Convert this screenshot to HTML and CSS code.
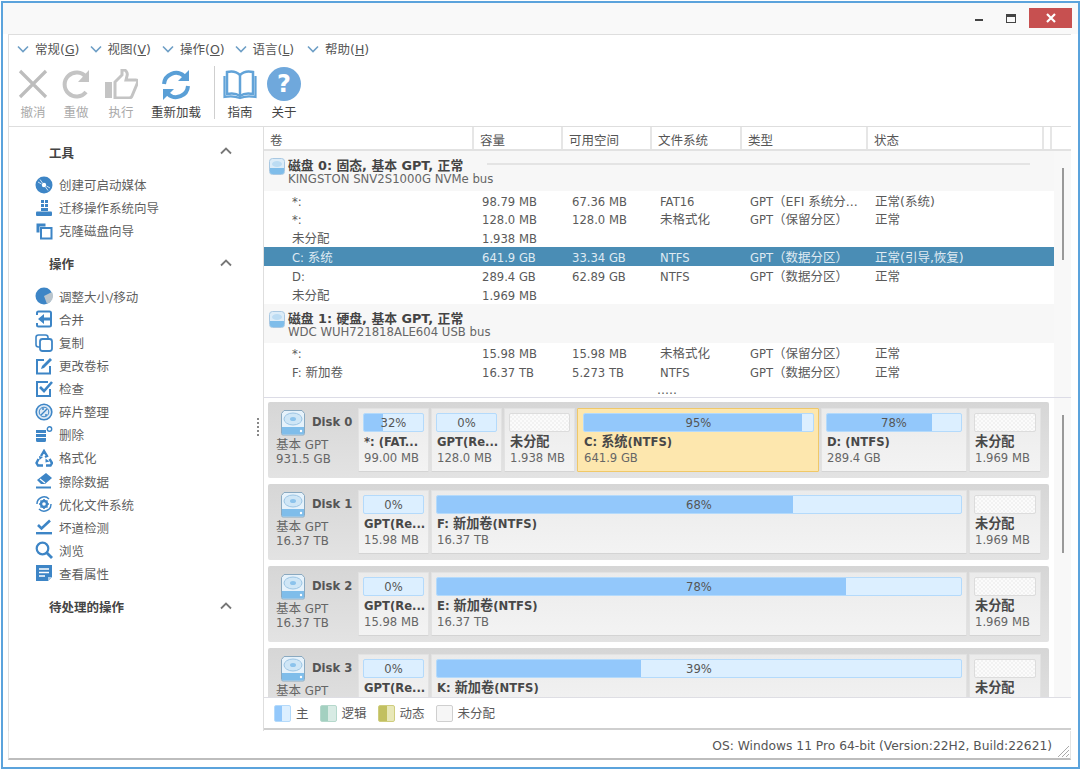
FILE: index.html
```html
<!DOCTYPE html>
<html lang="zh">
<head>
<meta charset="utf-8">
<title>分区助手</title>
<link rel="stylesheet" href="styles.css">
</head>
<body>
<svg class="defs" aria-hidden="true">
  <symbol id="chev" viewBox="0 0 12 8"><path d="M1 1.5 6 6.5 11 1.5" fill="none" stroke="#6e9fc6" stroke-width="1.6"/></symbol>
  <symbol id="up" viewBox="0 0 12 8"><path d="M1 6.5 6 1.5 11 6.5" fill="none" stroke="#777" stroke-width="1.8"/></symbol>
  <symbol id="disk-s" viewBox="0 0 16 17"><rect x=".5" y=".5" width="15" height="16" rx="3" fill="#dcecf8" stroke="#a9c8e2"/><path d="M1 10h14v4a2 2 0 0 1-2 2H3a2 2 0 0 1-2-2z" fill="#7fbdea"/><ellipse cx="8" cy="6" rx="5" ry="3" fill="#bcdcf3"/></symbol>
  <symbol id="disk-l" viewBox="0 0 26 27"><path d="M4 1.5h18l2.5 3v20a1.5 1.5 0 0 1-1.500 1.500H3a1.500 1.500 0 0 1-1.500-1.500v-20z" fill="#e6f2fb" stroke="#8aa9c0"/><path d="M2 18h22v6.500a1 1 0 0 1-1 1H3a1 1 0 0 1-1-1z" fill="#7fbdea"/><ellipse cx="13" cy="10" rx="9" ry="6" fill="#cfe6f6" stroke="#9cc5e4"/><ellipse cx="13" cy="10" rx="3" ry="2" fill="#8cc3ec"/><circle cx="21" cy="22" r="1.200" fill="#fff"/></symbol>
</svg>
<div class="win">
  <header class="titlebar">
    <span class="tb-min"></span>
    <span class="tb-max"></span>
    <span class="tb-close"><svg width="10" height="10" viewBox="0 0 10 10"><path d="M1 1 9 9M9 1 1 9" stroke="#fff" stroke-width="2.200"/></svg></span>
  </header>
  <div class="app">
    <nav class="menu">
      <span class="mi"><svg class="mchev"><use href="#chev"/></svg><span class="z">常规(<u>G</u>)</span></span>
      <span class="mi"><svg class="mchev"><use href="#chev"/></svg><span class="z">视图(<u>V</u>)</span></span>
      <span class="mi"><svg class="mchev"><use href="#chev"/></svg><span class="z">操作(<u>O</u>)</span></span>
      <span class="mi"><svg class="mchev"><use href="#chev"/></svg><span class="z">语言(<u>L</u>)</span></span>
      <span class="mi"><svg class="mchev"><use href="#chev"/></svg><span class="z">帮助(<u>H</u>)</span></span>
    </nav>
    <div class="toolbar">
      <div class="tool t-undo off"><svg width="30" height="30" viewBox="0 0 30 30"><path d="M2 2 28 28M28 2 2 28" stroke="#bdbdbd" stroke-width="3.200" fill="none"/></svg><span class="z">撤消</span></div>
      <div class="tool t-redo off"><svg width="28" height="30" viewBox="0 0 28 30"><path d="M24 8A12 12 0 1 0 24 23" stroke="#c4c4c4" stroke-width="4" fill="none"/><path d="M27 1v12H16z" fill="#c4c4c4"/></svg><span class="z">重做</span></div>
      <div class="tool t-apply off"><svg width="34" height="30" viewBox="0 0 34 30"><rect x="1" y="13" width="7" height="16" fill="#c4c4c4"/><path d="M11 13 18 6V1c4-1 6 3 5 6l-1 4h10c2 0 2 2 1 4l-5 12c-.5 1.500-1.500 2-3 2H11z" fill="none" stroke="#c4c4c4" stroke-width="3"/></svg><span class="z">执行</span></div>
      <div class="tool t-reload"><svg width="32" height="32" viewBox="0 0 32 32"><path d="M4 15A12 12 0 0 1 24 7" stroke="#5a9fd6" stroke-width="4" fill="none"/><path d="M29 1v11H18z" fill="#5a9fd6"/><path d="M28 17A12 12 0 0 1 8 25" stroke="#5a9fd6" stroke-width="4" fill="none"/><path d="M3 31V20h11z" fill="#5a9fd6"/></svg><span class="z">重新加载</span></div>
      <span class="tsep"></span>
      <div class="tool t-guide"><svg width="34" height="32" viewBox="0 0 34 32"><path d="M17 6C13 2 8 2 4 3v22c5-1 9-1 13 2 4-3 8-3 13-2V3c-4-1-9-1-13 3zM17 6v20" fill="#fff" stroke="#62a3d8" stroke-width="2.500"/><path d="M1.500 7v21c5-1 10-1 15.500 1 5-2 10-2 15.500-1V7" fill="none" stroke="#62a3d8" stroke-width="2.200"/></svg><span class="z">指南</span></div>
      <div class="tool t-about"><svg width="34" height="34" viewBox="0 0 34 34"><circle cx="17" cy="17" r="17" fill="#6fa8dc"/><text x="17" y="25" text-anchor="middle" class="qmark">?</text></svg><span class="z">关于</span></div>
    </div>
    <div class="split">
      <aside class="side">
        <div class="sh"><b class="z">工具</b><svg class="supc"><use href="#up"/></svg></div>
        <ul class="sl">
          <li><svg class="si" viewBox="0 0 18 18"><circle cx="9" cy="9" r="8.500" fill="#3d85c6"/><circle cx="9" cy="9" r="2.200" fill="#fff"/><path d="M5 3.500 7.500 7M3 6l3.500 2M13 14.500 10.500 11M15 12l-3.500-2" stroke="#cfe2f3" stroke-width="1"/></svg><span class="z">创建可启动媒体</span></li>
          <li><svg class="si" viewBox="0 0 18 18"><path d="M6 1h3v3H6zM10 1h3v3h-3zM6 5h3v3H6zM10 5h3v3h-3zM6 9h7v3H6z" fill="#3d85c6"/><rect x="1" y="12.500" width="16" height="4.500" rx="1" fill="#3d85c6"/></svg><span class="z">迁移操作系统向导</span></li>
          <li><svg class="si" viewBox="0 0 18 18"><path d="M1.500 1.500h9v3h-6v6h-3z" fill="#3d85c6"/><rect x="6" y="6" width="10.500" height="10.500" fill="#fff" stroke="#3d85c6" stroke-width="2"/></svg><span class="z">克隆磁盘向导</span></li>
        </ul>
        <div class="sh"><b class="z">操作</b><svg class="supc"><use href="#up"/></svg></div>
        <ul class="sl">
          <li><svg class="si" viewBox="0 0 18 18"><circle cx="9" cy="9" r="8.500" fill="#3d85c6"/><path d="M9 9 17 5A8.500 8.500 0 0 1 12 17z" fill="#b9c4cc"/></svg><span class="z">调整大小/移动</span></li>
          <li><svg class="si" viewBox="0 0 18 18"><path d="M2 5V3a1.500 1.500 0 0 1 1.500-1.500h11A1.500 1.500 0 0 1 16 3v12a1.500 1.500 0 0 1-1.500 1.500h-11A1.500 1.500 0 0 1 2 15v-2" fill="none" stroke="#3d85c6" stroke-width="2"/><path d="M17 7.500H9V4L3 9l6 5v-3.500h8z" fill="#3d85c6"/></svg><span class="z">合并</span></li>
          <li><svg class="si" viewBox="0 0 18 18"><rect x="1" y="1" width="12" height="12" rx="2.500" fill="none" stroke="#3d85c6" stroke-width="1.600"/><rect x="5" y="5" width="12" height="12" rx="2.500" fill="#fff" stroke="#3d85c6" stroke-width="1.800"/></svg><span class="z">复制</span></li>
          <li><svg class="si" viewBox="0 0 18 18"><path d="M9 3H2v13.500h13V9" fill="none" stroke="#3d85c6" stroke-width="2"/><path d="M6 12l1-3 8-8 2 2-8 8z" fill="#3d85c6"/></svg><span class="z">更改卷标</span></li>
          <li><svg class="si" viewBox="0 0 18 18"><path d="M13 2H2v14h13V9" fill="none" stroke="#3d85c6" stroke-width="2"/><path d="M5 7l4 4 8-9" fill="none" stroke="#3d85c6" stroke-width="2.600"/></svg><span class="z">检查</span></li>
          <li><svg class="si" viewBox="0 0 18 18"><circle cx="9" cy="9" r="7.800" fill="#dce9f5" stroke="#3d85c6" stroke-width="1.600"/><circle cx="9" cy="9" r="4.800" fill="none" stroke="#3d85c6" stroke-width="1"/><path d="M6 12 12 6M7 6h2M10 12h2" stroke="#3d85c6" stroke-width="1.400"/></svg><span class="z">碎片整理</span></li>
          <li><svg class="si" viewBox="0 0 18 18"><path d="M1 4h10v3H1zM1 8h10v3H1zM1 12h10v2.500a1.500 1.500 0 0 1-1.500 1.500h-7A1.500 1.500 0 0 1 1 14.500z" fill="#3d85c6"/><circle cx="14.500" cy="3" r="2.200" fill="none" stroke="#3d85c6" stroke-width="1.400"/></svg><span class="z">删除</span></li>
          <li><svg class="si" viewBox="0 0 18 18"><path d="M6 7l3-5 3 5-2 1M3.500 10 1.500 14l1.500 2.500h5M11 16.500h4.500l1.500-2.500-2.500-4" fill="none" stroke="#3d85c6" stroke-width="2.400"/><path d="M4 7l4 1-3.500 3zM10.500 13.500l4-1-4-3z" fill="#3d85c6"/></svg><span class="z">格式化</span></li>
          <li><svg class="si" viewBox="0 0 18 18"><path d="M11 1l6 5-7 6H6L2 8z" fill="#3d85c6"/><path d="M5 7l5 4" stroke="#fff" stroke-width="1.200"/><rect x="1" y="14.500" width="15" height="2" fill="#3d85c6"/></svg><span class="z">擦除数据</span></li>
          <li><svg class="si" viewBox="0 0 18 18"><path d="M2 9a7 7 0 0 1 12-5M16 9a7 7 0 0 1-12 5" fill="none" stroke="#3d85c6" stroke-width="1.500"/><circle cx="9" cy="9" r="3" fill="none" stroke="#3d85c6" stroke-width="2.400"/><path d="M9 4v2M9 12v2M4 9h2M12 9h2M5.500 5.500l1.500 1.500M11 11l1.500 1.500M12.500 5.500 11 7M7 11l-1.500 1.500" stroke="#3d85c6" stroke-width="1.600"/></svg><span class="z">优化文件系统</span></li>
          <li><svg class="si" viewBox="0 0 18 18"><path d="M3 7l3.500 3.500L15 2.500" fill="none" stroke="#3d85c6" stroke-width="2.600"/><rect x="1" y="14" width="16" height="2.400" fill="#3d85c6"/></svg><span class="z">坏道检测</span></li>
          <li><svg class="si" viewBox="0 0 18 18"><circle cx="7.500" cy="7.500" r="5.800" fill="none" stroke="#3d85c6" stroke-width="2.200"/><path d="M11.500 11.500 17 17" stroke="#3d85c6" stroke-width="2.800"/></svg><span class="z">浏览</span></li>
          <li><svg class="si" viewBox="0 0 18 18"><path d="M1 1h16v12l-4 4H1z" fill="#3d85c6"/><path d="M4 5h10M4 8.500h10M4 12h6" stroke="#fff" stroke-width="1.500"/><path d="M13 17v-4h4z" fill="#a9cbe8"/></svg><span class="z">查看属性</span></li>
        </ul>
        <div class="sh"><b class="z">待处理的操作</b><svg class="supc"><use href="#up"/></svg></div>
        <span class="grip-v"></span>
      </aside>
      <section class="right">
        <div class="lhead">
          <span class="c0 z">卷</span><span class="c1 z">容量</span><span class="c2 z">可用空间</span><span class="c3 z">文件系统</span><span class="c4 z">类型</span><span class="c5 z">状态</span><span class="c6"></span>
        </div>
        <div class="lbody">
          <div class="rows">
            <div class="grp"><svg class="gi"><use href="#disk-s"/></svg><div class="gt"><div class="gl"><b>磁盘 0: 固态, 基本 GPT, 正常</b><i class="rule"></i></div><div class="gs">KINGSTON SNV2S1000G NVMe bus</div></div></div>
            <div class="row"><span>*:</span><span>98.79 MB</span><span>67.36 MB</span><span>FAT16</span><span>GPT<span class="z">（EFI 系统分...</span></span><span class="z">正常(系统)</span></div>
            <div class="row"><span>*:</span><span>128.0 MB</span><span>128.0 MB</span><span class="z">未格式化</span><span>GPT<span class="z">（保留分区）</span></span><span class="z">正常</span></div>
            <div class="row"><span class="z">未分配</span><span>1.938 MB</span><span></span><span></span><span></span><span></span></div>
            <div class="row sel"><span>C: <span class="z">系统</span></span><span>641.9 GB</span><span>33.34 GB</span><span>NTFS</span><span>GPT<span class="z">（数据分区）</span></span><span class="z">正常(引导,恢复)</span></div>
            <div class="row"><span>D:</span><span>289.4 GB</span><span>62.89 GB</span><span>NTFS</span><span>GPT<span class="z">（数据分区）</span></span><span class="z">正常</span></div>
            <div class="row"><span class="z">未分配</span><span>1.969 MB</span><span></span><span></span><span></span><span></span></div>
            <div class="grp"><svg class="gi"><use href="#disk-s"/></svg><div class="gt"><div class="gl"><b>磁盘 1: 硬盘, 基本 GPT, 正常</b></div><div class="gs">WDC WUH721818ALE604 USB bus</div></div></div>
            <div class="row"><span>*:</span><span>15.98 MB</span><span>15.98 MB</span><span class="z">未格式化</span><span>GPT<span class="z">（保留分区）</span></span><span class="z">正常</span></div>
            <div class="row"><span>F: <span class="z">新加卷</span></span><span>16.37 TB</span><span>5.273 TB</span><span>NTFS</span><span>GPT<span class="z">（数据分区）</span></span><span class="z">正常</span></div>
            <div class="more">.....</div>
          </div>
          <div class="vs"><span class="thumb t1"></span></div>
        </div>
        <div class="gbody">
          <div class="disks">
            <div class="disk">
              <div class="dl"><div class="dlt"><svg class="di"><use href="#disk-l"/></svg><b>Disk 0</b></div><div class="dli"><span class="z">基本</span> GPT</div><div class="dli">931.5 GB</div></div>
              <div class="pt w71"><div class="bar"><i style="width:32%"></i><span>32%</span></div><b>*: (FAT...</b><span>99.00 MB</span></div>
              <div class="pt w71"><div class="bar"><i style="width:0%"></i><span>0%</span></div><b>GPT(Re...</b><span>128.0 MB</span></div>
              <div class="pt w71"><div class="bar un"></div><b class="z">未分配</b><span>1.938 MB</span></div>
              <div class="pt grow sel"><div class="bar"><i style="width:95%"></i><span>95%</span></div><b>C: <span class="z">系统</span>(NTFS)</b><span>641.9 GB</span></div>
              <div class="pt w146"><div class="bar"><i style="width:78%"></i><span>78%</span></div><b>D: (NTFS)</b><span>289.4 GB</span></div>
              <div class="pt w72"><div class="bar un"></div><b class="z">未分配</b><span>1.969 MB</span></div>
            </div>
            <div class="disk">
              <div class="dl"><div class="dlt"><svg class="di"><use href="#disk-l"/></svg><b>Disk 1</b></div><div class="dli"><span class="z">基本</span> GPT</div><div class="dli">16.37 TB</div></div>
              <div class="pt w71"><div class="bar"><i style="width:0%"></i><span>0%</span></div><b>GPT(Re...</b><span>15.98 MB</span></div>
              <div class="pt grow"><div class="bar"><i style="width:68%"></i><span>68%</span></div><b>F: <span class="z">新加卷</span>(NTFS)</b><span>16.37 TB</span></div>
              <div class="pt w72"><div class="bar un"></div><b class="z">未分配</b><span>1.969 MB</span></div>
            </div>
            <div class="disk">
              <div class="dl"><div class="dlt"><svg class="di"><use href="#disk-l"/></svg><b>Disk 2</b></div><div class="dli"><span class="z">基本</span> GPT</div><div class="dli">16.37 TB</div></div>
              <div class="pt w71"><div class="bar"><i style="width:0%"></i><span>0%</span></div><b>GPT(Re...</b><span>15.98 MB</span></div>
              <div class="pt grow"><div class="bar"><i style="width:78%"></i><span>78%</span></div><b>E: <span class="z">新加卷</span>(NTFS)</b><span>16.37 TB</span></div>
              <div class="pt w72"><div class="bar un"></div><b class="z">未分配</b><span>1.969 MB</span></div>
            </div>
            <div class="disk">
              <div class="dl"><div class="dlt"><svg class="di"><use href="#disk-l"/></svg><b>Disk 3</b></div><div class="dli"><span class="z">基本</span> GPT</div></div>
              <div class="pt w71"><div class="bar"><i style="width:0%"></i><span>0%</span></div><b>GPT(Re...</b></div>
              <div class="pt grow"><div class="bar"><i style="width:39%"></i><span>39%</span></div><b>K: <span class="z">新加卷</span>(NTFS)</b></div>
              <div class="pt w72"><div class="bar un"></div><b class="z">未分配</b></div>
            </div>
          </div>
          <div class="vs"><span class="thumb t2"></span></div>
        </div>
        <div class="legend">
          <span class="lg"><i class="sw sw-p"></i><span class="z">主</span></span>
          <span class="lg"><i class="sw sw-l"></i><span class="z">逻辑</span></span>
          <span class="lg"><i class="sw sw-d"></i><span class="z">动态</span></span>
          <span class="lg"><i class="sw sw-u"></i><span class="z">未分配</span></span>
        </div>
      </section>
    </div>
  </div>
  <footer class="status">OS: Windows 11 Pro 64-bit (Version:22H2, Build:22621)<svg class="sgrip" width="12" height="12" viewBox="0 0 12 12"><path d="M12 1 1 12M12 5 5 12M12 9 9 12" stroke="#aaa" stroke-width="1"/></svg></footer>
</div>
</body>
</html>
```
FILE: styles.css
```css
* { box-sizing: border-box; }
html, body { margin: 0; padding: 0; }
body {
  width: 1080px; height: 769px; overflow: hidden;
  font-family: "DejaVu Sans", "Noto Sans CJK SC", sans-serif;
  font-size: 11.6px; line-height: 15px; color: #5a5a5a; background: #fff;
}
.defs { display: none; }
.z { font-family: "DejaVu Sans", "Noto Sans CJK SC", sans-serif; font-size: 12.5px; }
b { font-weight: 700; color: #4a4a4a; }

.win {
  width: 1079px; height: 768px; margin: 1px 0 0 1px;
  border: 2px solid #5ba3dc; background: #fff;
  display: flex; flex-direction: column;
}
.titlebar {
  height: 31px; flex: none; background: #f9f9f9;
  display: flex; justify-content: flex-end; align-items: flex-start;
  padding: 5px 6px 0 0;
}
.tb-min { width: 8px; height: 2px; background: #444; margin: 11px 23px 0 0; }
.tb-max { width: 10px; height: 9px; border: 1px solid #444; border-top-width: 3px; margin: 6px 13px 0 0; }
.tb-close { width: 43px; height: 20px; background: #c75050; display: flex; align-items: center; justify-content: center; }

.app {
  margin: 0 0 0 5px; width: 1063px; height: 697px; flex: none;
  border: 1px solid #dedede; border-bottom: 0; border-right: 0;
  display: flex; flex-direction: column; background: #fff;
}
.menu { height: 25px; flex: none; display: flex; padding: 3px 0 0 8px; align-items: center; }
.mi { width: 72.5px; display: flex; align-items: center; gap: 6px; flex: none; color: #555; }
.mchev { width: 12px; height: 8px; flex: none; }

.toolbar {
  height: 67px; flex: none; display: flex; align-items: flex-start;
  border-bottom: 1px solid #dedede; position: relative;
}
.tool { display: flex; flex-direction: column; align-items: center; height: 66px; justify-content: space-between; padding: 9px 0 5px; flex: none; color: #444; line-height: 16px; }
.tool.off { color: #aaa; }
.tool svg { flex: none; }
.t-undo { width: 30px; margin-left: 9px; }
.t-redo { width: 28px; margin-left: 14px; }
.t-apply { width: 34px; margin-left: 14px; }
.t-reload { width: 52px; margin-left: 12px; }
.tsep { width: 1px; height: 53px; background: #cfcfcf; margin: 6px 8px 0 12px; flex: none; }
.t-guide { width: 34px; }
.t-about { width: 34px; margin-left: 10px; padding-top: 7px; }
.qmark { font-family: "DejaVu Sans", sans-serif; font-weight: 700; font-size: 24px; fill: #fff; }

.split { flex: 1; min-height: 0; display: flex; }
.side {
  width: 255px; flex: none; border-right: 1px solid #dedede; padding-top: 12px;
  position: relative; background: #fff;
}
.sh { height: 26px; display: flex; align-items: center; justify-content: space-between; padding: 0 31px 0 40px; }
.sh b { color: #444; margin-top: 2px; }
.supc { width: 12px; height: 8px; margin-top: -2px; }
.sl { list-style: none; margin: 8px 0 8.5px; padding: 0 0 0 26px; }
.sl li { height: 23.1px; display: flex; align-items: center; gap: 6px; color: #5f5f5f; }
.sl li .z { margin-top: 2px; }
.si { width: 18px; height: 18px; flex: none; }
.grip-v {
  position: absolute; left: 248px; top: 291px; width: 2px; height: 20px;
  background: repeating-linear-gradient(#888 0 2px, transparent 2px 4px);
}

.right { width: 807px; flex: none; display: flex; flex-direction: column; min-width: 0; }
.lhead { height: 24px; flex: none; display: flex; border-bottom: 2px solid #e2e2e2; align-items: stretch; color: #555; }
.lhead > span { display: flex; align-items: center; padding: 4px 0 0 6px; border-right: 2px solid #e6e6e6; flex: none; }
.c0 { width: 210px; }
.c1 { width: 89px; }
.c2 { width: 89px; }
.c3 { width: 90px; }
.c4 { width: 126px; }
.c5 { width: 176px; }
.lbody { height: 247px; flex: none; display: flex; overflow: hidden; border-bottom: 1px solid #dcdce6; }
.rows { width: 790px; flex: none; }
.vs { flex: 1; background: #f8f8f8; position: relative; display: flex; justify-content: center; }
.thumb { width: 2px; background: #999; flex: none; }
.t1 { height: 92px; margin-top: 17px; }
.t2 { height: 138px; margin-top: 17px; }
.grp { height: 39.5px; background: #f7f7f7; display: flex; padding: 7px 0 0 5px; gap: 3px; }
.gi { width: 16px; height: 17px; flex: none; }
.gt { flex: 1; min-width: 0; }
.gl { display: flex; align-items: center; height: 15px; }
.gl b { font-size: 12.8px; font-family: "DejaVu Sans", "Noto Sans CJK SC", sans-serif; white-space: nowrap; width: 199px; flex: none; color: #444; }
.rule { width: 543px; height: 2px; background: #e4e4e4; flex: none; font-style: normal; margin-top: -3px; }
.gs { line-height: 13px; color: #666; font-size: 11.7px; white-space: nowrap; }
.row {
  height: 18.9px; display: grid; grid-template-columns: 190px 90px 88px 90px 125px 1fr;
  padding: 3px 0 0 28px; align-items: center; white-space: nowrap; line-height: 16px;
}
.row.sel { background: #4a8db5; color: #dfeaf2; }
.more { padding-left: 393px; line-height: 10px; font-size: 12.5px; margin-top: 4px; white-space: nowrap; }
.gbody { height: 299px; flex: none; display: flex; overflow: hidden; }
.disks { width: 790px; flex: none; padding: 4px 0 0 4px; display: flex; flex-direction: column; gap: 6px; overflow: hidden; }
.disk {
  width: 781px; height: 76px; flex: none; padding: 6px 8px 6px 0;
  display: flex; gap: 2px; background: linear-gradient(#d6d6d6, #e3e3e3);
  border-radius: 2px;
}
.dl { width: 90px; flex: none; padding: 1px 0 0 8px; margin-right: -2px; }
.dlt { display: flex; align-items: center; gap: 6px; height: 27px; padding-left: 4px; }
.dlt b { margin-top: 0; color: #555; }
.di { width: 26px; height: 27px; flex: none; }
.dli { line-height: 14px; height: 14px; color: #666; font-size: 11.8px; white-space: nowrap; }
.dlt + .dli { margin-top: 2px; }
.pt {
  flex: none; background: linear-gradient(#ebebeb, #f3f3f3); border: 1px solid #e2e2e2; border-bottom-color: #d4d4d4;
  padding: 4px 4px 0; display: flex; flex-direction: column; white-space: nowrap; overflow: hidden; line-height: 16px;
  border-radius: 1px;
}
.pt > b { margin-top: 2px; height: 16px; padding-left: 1px; color: #484848; flex: none; }
.pt > b.z, .pt > b .z { font-size: 13.2px; }
.pt > span { color: #666; padding-left: 1px; height: 16px; flex: none; }
.w71 { width: 71px; }
.w72 { width: 72px; }
.w146 { width: 146px; }
.grow { flex: 1; min-width: 0; }
.pt.sel { background: #fde7ae; border: 1px solid #f0c868; padding-left: 5px; }
.bar {
  height: 19px; flex: none; position: relative; background: #dcefff; border: 1px solid #b4dafb;
  border-radius: 2px; text-align: center; line-height: 18px; color: #555; overflow: hidden;
}
.bar i { position: absolute; left: 0; top: 0; bottom: 0; background: #93c8fb; }
.bar span { position: relative; }
.bar.un {
  background: repeating-conic-gradient(#f2f2f2 0 25%, #fbfbfb 0 50%) 0 0 / 4px 4px;
  border-color: #dcdcdc;
}
.legend { height: 33px; flex: none; display: flex; align-items: center; padding: 0 0 0 10px; gap: 11px; border-top: 1px solid #dedee4; border-bottom: 2px solid #cfcfcf; }
.lg { display: flex; align-items: center; gap: 5px; }
.sw { width: 17px; height: 17px; flex: none; display: block; border-radius: 2px; }
.sw-p { background: linear-gradient(90deg, #93c8fb 50%, #dcefff 50%); border: 1px solid #b4dafb; }
.sw-l { background: linear-gradient(90deg, #a3d0c0 50%, #d8ebe4 50%); border: 1px solid #b5d8cc; }
.sw-d { background: linear-gradient(90deg, #c2c060 50%, #e8e8b8 50%); border: 1px solid #cfcd7e; }
.sw-u { background: #f6f6f6; border: 1px solid #cfcfcf; }
.status {
  height: 29px; width: 1063px; margin-left: 5px; flex: none; border: 1px solid #e4e4e4; border-top: 0; border-bottom: 2px solid #bdbdbd;
  display: flex; align-items: center; justify-content: flex-end; padding: 3px 18px 0 0; color: #555; position: relative; white-space: nowrap; font-size: 12.25px;
}
.sgrip { position: absolute; right: 1px; bottom: 1px; }
```
